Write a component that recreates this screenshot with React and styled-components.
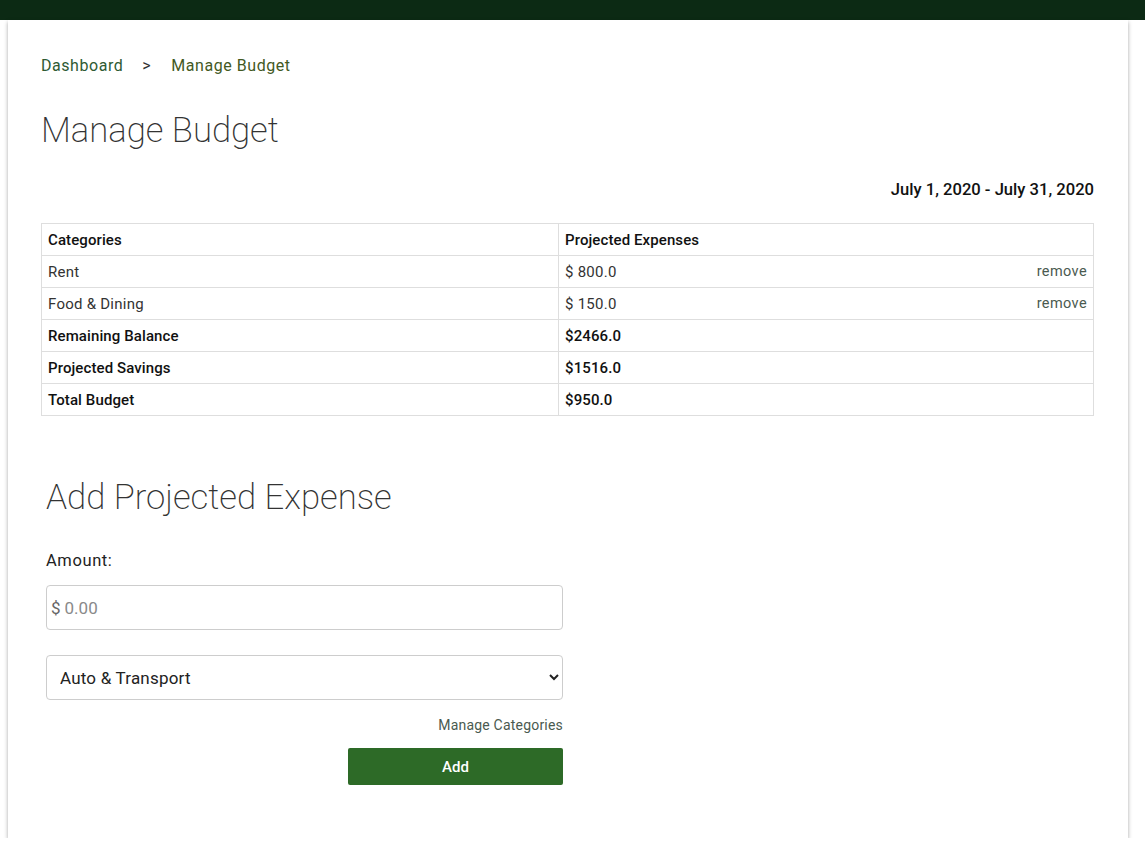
import React from "react";
import styled, { createGlobalStyle } from "styled-components";

const Global = createGlobalStyle`
  html, body { margin: 0; padding: 0; background: #fff; }
  body { font-family: Roboto, "Liberation Sans", sans-serif; color: #222; }
  * { box-sizing: border-box; }
`;

const TopBar = styled.div`
  height: 20px;
  background: #0c2a14;
`;

const Card = styled.main`
  margin-left: 8px;
  width: 1120px;
  background: #fff;
  padding: 36px 34px 53px 33px;
  box-shadow: 0 2px 4px rgba(0, 0, 0, 0.35);
`;

const Crumbs = styled.nav`
  display: flex;
  align-items: center;
  font-size: 16px;
  line-height: 20px;
  letter-spacing: 0.55px;
`;

const Crumb = styled.a`
  color: ${(p) => (p.$current ? "#43591f" : "#2e5a33")};
  text-decoration: none;
`;

const Sep = styled.span`
  color: #333;
  margin: 0 20px 0 19px;
`;

const Title = styled.h1`
  margin: ${(p) => p.$mt || "32px"} 0 0 0;
  font-size: 34.7px;
  line-height: 44px;
  font-weight: 200;
  color: #333;
`;

const DateRange = styled.div`
  margin-top: 26px;
  text-align: right;
  font-size: 16.6px;
  line-height: 24px;
  font-weight: 500;
  color: #111;
`;

const Table = styled.table`
  margin-top: 21px;
  width: 100%;
  border-collapse: collapse;
  font-size: 15px;
`;

const Cell = styled.td`
  border: 1px solid #dedede;
  height: 32px;
  padding: 0 6px;
  width: ${(p) => p.$w || "auto"};
  font-weight: ${(p) => (p.$bold ? 500 : 400)};
  letter-spacing: ${(p) => (p.$bold ? "0.1px" : "0.25px")};
  color: ${(p) => (p.$bold ? "#111" : "#333")};
`;

const CellInner = styled.div`
  display: flex;
  justify-content: space-between;
  align-items: center;
`;

const Remove = styled.a`
  color: #4a5a50;
  font-size: 14.5px;
  letter-spacing: 0.4px;
  cursor: pointer;
`;

const Form = styled.section`
  padding-left: 5px;
  width: 522px;
`;

const Label = styled.label`
  display: block;
  margin-top: 32px;
  font-size: 16.5px;
  line-height: 20px;
  letter-spacing: 0.6px;
  color: #222;
`;

const InputGroup = styled.div`
  margin-top: 14px;
  height: 45px;
  border: 1px solid #cdcdcd;
  border-radius: 4px;
  display: flex;
  align-items: center;
  padding-left: 4px;
  font-size: 17px;
`;

const Prefix = styled.span`
  color: #666;
`;

const Input = styled.input`
  border: none;
  outline: none;
  flex: 1;
  font: inherit;
  color: #333;
  padding-left: 4px;
  background: transparent;
  &::placeholder { color: #8a8a8a; }
`;

const Select = styled.select`
  margin-top: 25px;
  width: 100%;
  height: 45px;
  border: 1px solid #cdcdcd;
  border-radius: 4px;
  background: #fff;
  font-family: Roboto, "Liberation Sans", sans-serif;
  font-size: 17px;
  letter-spacing: 0.2px;
  color: #222;
  padding: 0 8px 0 9px;
`;

const LinkRow = styled.div`
  margin-top: 16px;
  text-align: right;
  font-size: 14px;
  line-height: 18px;
  letter-spacing: 0.2px;
`;

const SmallLink = styled.a`
  color: #4a5a50;
`;

const ButtonRow = styled.div`
  margin-top: 14px;
  display: flex;
  justify-content: flex-end;
`;

const Button = styled.button`
  width: 215px;
  height: 37px;
  background: #2d6a27;
  color: #fff;
  border: none;
  border-radius: 2px;
  font-family: Roboto, "Liberation Sans", sans-serif;
  font-size: 15px;
  font-weight: 500;
`;

const rows = [
  { name: "Rent", value: "$ 800.0", remove: true },
  { name: "Food & Dining", value: "$ 150.0", remove: true },
  { name: "Remaining Balance", value: "$2466.0", bold: true },
  { name: "Projected Savings", value: "$1516.0", bold: true },
  { name: "Total Budget", value: "$950.0", bold: true },
];

export default function App() {
  return (
    <>
      <Global />
      <TopBar />
      <Card>
        <Crumbs>
          <Crumb>Dashboard</Crumb>
          <Sep>&gt;</Sep>
          <Crumb $current>Manage Budget</Crumb>
        </Crumbs>
        <Title>Manage Budget</Title>
        <DateRange>July 1, 2020 - July 31, 2020</DateRange>
        <Table>
          <tbody>
            <tr>
              <Cell $bold $w="517px">Categories</Cell>
              <Cell $bold>Projected Expenses</Cell>
            </tr>
            {rows.map((r) => (
              <tr key={r.name}>
                <Cell $bold={r.bold}>{r.name}</Cell>
                <Cell $bold={r.bold}>
                  <CellInner>
                    <span>{r.value}</span>
                    {r.remove && <Remove>remove</Remove>}
                  </CellInner>
                </Cell>
              </tr>
            ))}
          </tbody>
        </Table>
        <Form>
          <Title $mt="59px">Add Projected Expense</Title>
          <Label>Amount:</Label>
          <InputGroup>
            <Prefix>$</Prefix>
            <Input placeholder="0.00" />
          </InputGroup>
          <Select defaultValue="auto">
            <option value="auto">Auto &amp; Transport</option>
            <option value="food">Food &amp; Dining</option>
            <option value="rent">Rent</option>
          </Select>
          <LinkRow>
            <SmallLink>Manage Categories</SmallLink>
          </LinkRow>
          <ButtonRow>
            <Button>Add</Button>
          </ButtonRow>
        </Form>
      </Card>
    </>
  );
}
